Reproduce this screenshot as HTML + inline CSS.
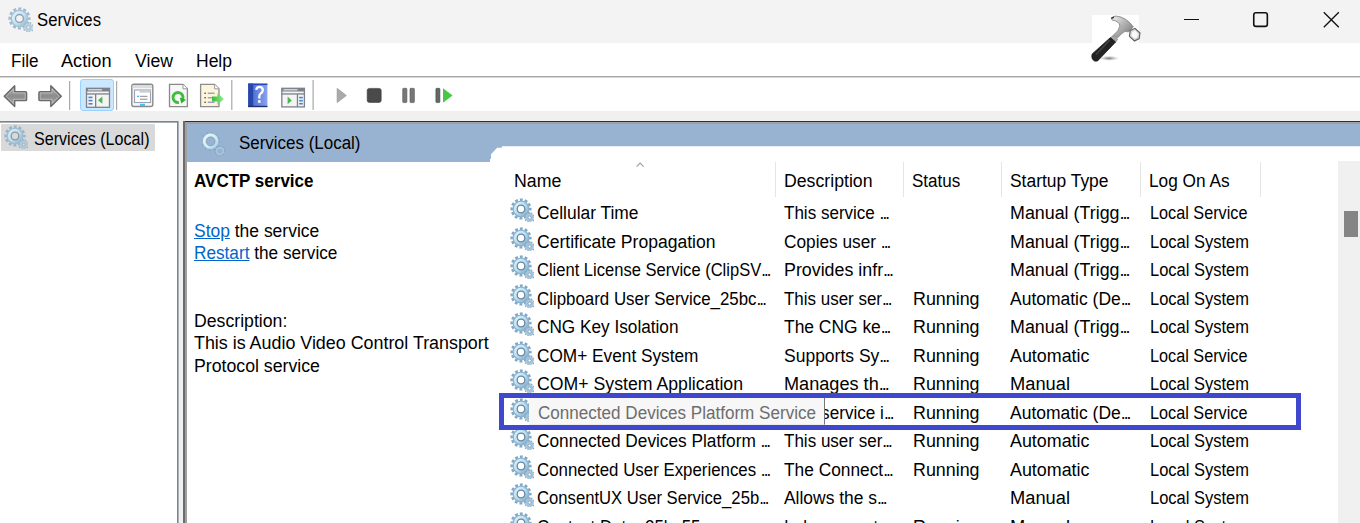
<!DOCTYPE html><html><head><meta charset="utf-8"><style>
*{margin:0;padding:0;box-sizing:border-box}
html,body{width:1360px;height:523px;overflow:hidden;background:#fff;font-family:"Liberation Sans",sans-serif}
.a{position:absolute}
.t{position:absolute;white-space:nowrap;line-height:18px;transform-origin:0 0}
.el{letter-spacing:-2px}
.lk{color:#0066cc;text-decoration:underline}
</style></head><body><div class="a" style="left:0;top:0;width:1360px;height:43px;background:#f3f3f3"></div>
<div class="a" style="left:0;top:76px;width:1360px;height:1px;background:#a8a8a8"></div>
<div class="a" style="left:0;top:77px;width:1360px;height:1px;background:#d4d8de"></div>
<div class="a" style="left:0;top:111px;width:1360px;height:10px;background:#f0f0f0"></div>
<div class="a" style="left:0;top:121px;width:184px;height:402px;background:#f0f0f0"></div>
<div class="a" style="left:0;top:121px;width:179px;height:402px;background:#fff"></div>
<div class="a" style="left:0;top:121px;width:179px;height:1px;background:#7d8593"></div>
<div class="a" style="left:0;top:122px;width:178px;height:1px;background:#a9afb8"></div>
<div class="a" style="left:177px;top:121px;width:1px;height:402px;background:#7d8593"></div>
<div class="a" style="left:178px;top:121px;width:1px;height:402px;background:#a9afb8"></div>
<div class="a" style="left:1px;top:124px;width:154px;height:27px;background:#d9d9d9;border-radius:1px"></div>
<div class="a" style="left:183px;top:121px;width:1177px;height:402px;background:#a0a0a0"></div>
<div class="a" style="left:183px;top:121px;width:1177px;height:1px;background:#303030"></div>
<div class="a" style="left:183px;top:121px;width:2px;height:402px;background:#6c6c6c"></div>
<div class="a" style="left:186.5px;top:123.8px;width:1174px;height:400px;background:#fff"></div>
<div class="a" style="left:186.5px;top:123.8px;width:1174px;height:38px;background:#98b2d2"></div>
<div class="a" style="left:489.7px;top:146.3px;width:870.3px;height:377px;background:#fff;clip-path:polygon(0 15.5px,0 12.5px,1.3px 12.5px,1.3px 8px,7.2px 1.8px,7.2px 1.5px,12.2px 1.5px,12.2px 0,100% 0,100% 100%,0 100%)"></div>
<div class="a" style="left:775px;top:162px;width:1px;height:35px;background:#e5e5e5"></div>
<div class="a" style="left:903px;top:162px;width:1px;height:35px;background:#e5e5e5"></div>
<div class="a" style="left:1001px;top:162px;width:1px;height:35px;background:#e5e5e5"></div>
<div class="a" style="left:1140px;top:162px;width:1px;height:35px;background:#e5e5e5"></div>
<div class="a" style="left:1260px;top:162px;width:1px;height:35px;background:#e5e5e5"></div>
<div class="a" style="left:1338px;top:161px;width:22px;height:362px;background:#f0f0f0"></div>
<div class="a" style="left:1344px;top:211px;width:14px;height:25.5px;background:#858585"></div>
<svg class="a" style="left:634px;top:160px" width="12" height="9"><path d="M2.6 6.6 L6.1 3.1 L9.6 6.6" fill="none" stroke="#a0a0a0" stroke-width="1.2"/></svg>
<svg width="0" height="0" style="position:absolute"><defs>
<linearGradient id="gb" x1="0" y1="0" x2="1" y2="1"><stop offset="0" stop-color="#d8f2fc"/><stop offset="0.55" stop-color="#b4dcf0"/><stop offset="1" stop-color="#86aecb"/></linearGradient>
<linearGradient id="gh" x1="0" y1="0" x2="1" y2="1"><stop offset="0" stop-color="#e4f8fc"/><stop offset="0.6" stop-color="#c8ecf6"/><stop offset="1" stop-color="#a6cfe8"/></linearGradient>
<symbol id="gear" viewBox="0 0 24 24">
<circle cx="11" cy="11" r="9.3" fill="none" stroke="#83a8c4" stroke-width="2.6" stroke-dasharray="2.9 1.97" stroke-dashoffset="1.45"/>
<circle cx="11" cy="11" r="6.1" fill="none" stroke="#8cb2ce" stroke-width="4.9"/>
<circle cx="11" cy="11" r="5.6" fill="none" stroke="url(#gb)" stroke-width="3.2"/>
<circle cx="11" cy="11" r="3.8" fill="none" stroke="#6c88a0" stroke-width="1.3"/>
<circle cx="19.6" cy="19.6" r="4.5" fill="none" stroke="#86a7c0" stroke-width="1.8" stroke-dasharray="1.4 1.43" stroke-dashoffset="0.7"/>
<circle cx="19.6" cy="19.6" r="2.8" fill="none" stroke="#a3c6dc" stroke-width="2.6"/>
<circle cx="19.6" cy="19.6" r="1.5" fill="none" stroke="#7d9bb3" stroke-width="0.7"/>
</symbol>
<symbol id="gearh" viewBox="0 0 24 24">
<circle cx="8.6" cy="9.3" r="8.9" fill="none" stroke="#7890ab" stroke-width="1.4" stroke-dasharray="1.1 3.6" opacity="0.6"/>
<circle cx="8.6" cy="9.3" r="6.2" fill="none" stroke="url(#gh)" stroke-width="3.2"/>
<circle cx="8.6" cy="9.3" r="4.5" fill="none" stroke="#7e7a78" stroke-width="0.8" opacity="0.55"/>
<circle cx="18" cy="19" r="3.3" fill="none" stroke="#b4d0e2" stroke-width="1.4" opacity="0.7"/>
<circle cx="18" cy="19" r="4.9" fill="none" stroke="#7890ab" stroke-width="1.1" stroke-dasharray="1 2.1" opacity="0.6"/>
</symbol></defs></svg>
<svg class="a" style="left:7.5px;top:6.5px;opacity:0.75" width="25" height="25"><use href="#gear"/></svg>
<svg class="a" style="left:3.5px;top:124.5px;opacity:0.75" width="24" height="24"><use href="#gear"/></svg>
<svg class="a" style="left:202px;top:132px;opacity:1" width="24" height="24"><use href="#gearh"/></svg>
<svg class="a" style="left:510px;top:198.2px;opacity:1" width="24" height="24"><use href="#gear"/></svg>
<svg class="a" style="left:510px;top:226.7px;opacity:1" width="24" height="24"><use href="#gear"/></svg>
<svg class="a" style="left:510px;top:255.2px;opacity:1" width="24" height="24"><use href="#gear"/></svg>
<svg class="a" style="left:510px;top:283.7px;opacity:1" width="24" height="24"><use href="#gear"/></svg>
<svg class="a" style="left:510px;top:312.2px;opacity:1" width="24" height="24"><use href="#gear"/></svg>
<svg class="a" style="left:510px;top:340.7px;opacity:1" width="24" height="24"><use href="#gear"/></svg>
<svg class="a" style="left:510px;top:369.2px;opacity:1" width="24" height="24"><use href="#gear"/></svg>
<svg class="a" style="left:510px;top:397.7px;opacity:1" width="24" height="24"><use href="#gear"/></svg>
<svg class="a" style="left:510px;top:426.2px;opacity:1" width="24" height="24"><use href="#gear"/></svg>
<svg class="a" style="left:510px;top:454.7px;opacity:1" width="24" height="24"><use href="#gear"/></svg>
<svg class="a" style="left:510px;top:483.2px;opacity:1" width="24" height="24"><use href="#gear"/></svg>
<svg class="a" style="left:510px;top:511.7px;opacity:1" width="24" height="24"><use href="#gear"/></svg>
<div class="t" style="left:36.5px;top:11.0px;font-size:18px;font-weight:normal;color:#000;transform:scaleX(0.9271)">Services</div>
<div class="t" style="left:11.0px;top:52.0px;font-size:18px;font-weight:normal;color:#000;transform:scaleX(0.9478)">File</div>
<div class="t" style="left:61.0px;top:52.0px;font-size:18px;font-weight:normal;color:#000;transform:scaleX(1.0094)">Action</div>
<div class="t" style="left:134.5px;top:52.0px;font-size:18px;font-weight:normal;color:#000;transform:scaleX(0.9818)">View</div>
<div class="t" style="left:195.5px;top:52.0px;font-size:18px;font-weight:normal;color:#000;transform:scaleX(0.9722)">Help</div>
<div class="t" style="left:34.0px;top:129.7px;font-size:18px;font-weight:normal;color:#000;transform:scaleX(0.8950)">Services (Local)</div>
<div class="t" style="left:238.5px;top:134.3px;font-size:18px;font-weight:normal;color:#000;transform:scaleX(0.9415)">Services (Local)</div>
<div class="t" style="left:193.6px;top:172.0px;font-size:18px;font-weight:bold;color:#000;transform:scaleX(0.9454)">AVCTP service</div>
<div class="t" style="left:193.9px;top:221.6px;font-size:18px;font-weight:normal;color:#000;transform:scaleX(0.9700)"><span class="lk">Stop</span> the service</div>
<div class="t" style="left:193.9px;top:244.1px;font-size:18px;font-weight:normal;color:#000;transform:scaleX(0.9555)"><span class="lk">Restart</span> the service</div>
<div class="t" style="left:194.2px;top:311.6px;font-size:18px;font-weight:normal;color:#000;transform:scaleX(0.9816)">Description:</div>
<div class="t" style="left:194.2px;top:334.1px;font-size:18px;font-weight:normal;color:#000;transform:scaleX(0.9928)">This is Audio Video Control Transport</div>
<div class="t" style="left:194.2px;top:356.6px;font-size:18px;font-weight:normal;color:#000;transform:scaleX(0.9831)">Protocol service</div>
<div class="t" style="left:513.7px;top:172.2px;font-size:18px;font-weight:normal;color:#000;transform:scaleX(0.9851)">Name</div>
<div class="t" style="left:783.7px;top:172.2px;font-size:18px;font-weight:normal;color:#000;transform:scaleX(0.9828)">Description</div>
<div class="t" style="left:912.4px;top:172.2px;font-size:18px;font-weight:normal;color:#000;transform:scaleX(0.9465)">Status</div>
<div class="t" style="left:1010.0px;top:172.2px;font-size:18px;font-weight:normal;color:#000;transform:scaleX(0.9682)">Startup Type</div>
<div class="t" style="left:1149.3px;top:172.2px;font-size:18px;font-weight:normal;color:#000;transform:scaleX(0.9576)">Log On As</div>
<div class="t" style="left:537.0px;top:204.2px;font-size:18px;font-weight:normal;color:#000;transform:scaleX(0.9664)">Cellular Time</div>
<div class="t" style="left:783.5px;top:204.2px;font-size:18px;font-weight:normal;color:#000;transform:scaleX(0.9460)">This service <span class="el">...</span></div>
<div class="t" style="left:1010.4px;top:204.2px;font-size:18px;font-weight:normal;color:#000;transform:scaleX(0.9925)">Manual (Trigg<span class="el">...</span></div>
<div class="t" style="left:1150.0px;top:204.2px;font-size:18px;font-weight:normal;color:#000;transform:scaleX(0.9023)">Local Service</div>
<div class="t" style="left:537.0px;top:232.7px;font-size:18px;font-weight:normal;color:#000;transform:scaleX(0.9748)">Certificate Propagation</div>
<div class="t" style="left:783.5px;top:232.7px;font-size:18px;font-weight:normal;color:#000;transform:scaleX(0.9584)">Copies user <span class="el">...</span></div>
<div class="t" style="left:1010.4px;top:232.7px;font-size:18px;font-weight:normal;color:#000;transform:scaleX(0.9925)">Manual (Trigg<span class="el">...</span></div>
<div class="t" style="left:1150.0px;top:232.7px;font-size:18px;font-weight:normal;color:#000;transform:scaleX(0.9163)">Local System</div>
<div class="t" style="left:537.0px;top:261.2px;font-size:18px;font-weight:normal;color:#000;transform:scaleX(0.9185)">Client License Service (ClipSV<span class="el">...</span></div>
<div class="t" style="left:783.5px;top:261.2px;font-size:18px;font-weight:normal;color:#000;transform:scaleX(0.9903)">Provides infr<span class="el">...</span></div>
<div class="t" style="left:1010.4px;top:261.2px;font-size:18px;font-weight:normal;color:#000;transform:scaleX(0.9925)">Manual (Trigg<span class="el">...</span></div>
<div class="t" style="left:1150.0px;top:261.2px;font-size:18px;font-weight:normal;color:#000;transform:scaleX(0.9163)">Local System</div>
<div class="t" style="left:537.0px;top:289.7px;font-size:18px;font-weight:normal;color:#000;transform:scaleX(0.9377)">Clipboard User Service_25bc<span class="el">...</span></div>
<div class="t" style="left:783.5px;top:289.7px;font-size:18px;font-weight:normal;color:#000;transform:scaleX(0.9421)">This user ser<span class="el">...</span></div>
<div class="t" style="left:913.0px;top:289.7px;font-size:18px;font-weight:normal;color:#000;transform:scaleX(0.9916)">Running</div>
<div class="t" style="left:1010.4px;top:289.7px;font-size:18px;font-weight:normal;color:#000;transform:scaleX(0.9711)">Automatic (De<span class="el">...</span></div>
<div class="t" style="left:1150.0px;top:289.7px;font-size:18px;font-weight:normal;color:#000;transform:scaleX(0.9163)">Local System</div>
<div class="t" style="left:537.0px;top:318.2px;font-size:18px;font-weight:normal;color:#000;transform:scaleX(0.9557)">CNG Key Isolation</div>
<div class="t" style="left:783.5px;top:318.2px;font-size:18px;font-weight:normal;color:#000;transform:scaleX(0.9675)">The CNG ke<span class="el">...</span></div>
<div class="t" style="left:913.0px;top:318.2px;font-size:18px;font-weight:normal;color:#000;transform:scaleX(0.9916)">Running</div>
<div class="t" style="left:1010.4px;top:318.2px;font-size:18px;font-weight:normal;color:#000;transform:scaleX(0.9925)">Manual (Trigg<span class="el">...</span></div>
<div class="t" style="left:1150.0px;top:318.2px;font-size:18px;font-weight:normal;color:#000;transform:scaleX(0.9163)">Local System</div>
<div class="t" style="left:537.0px;top:346.7px;font-size:18px;font-weight:normal;color:#000;transform:scaleX(0.9581)">COM+ Event System</div>
<div class="t" style="left:783.5px;top:346.7px;font-size:18px;font-weight:normal;color:#000;transform:scaleX(0.9722)">Supports Sy<span class="el">...</span></div>
<div class="t" style="left:913.0px;top:346.7px;font-size:18px;font-weight:normal;color:#000;transform:scaleX(0.9916)">Running</div>
<div class="t" style="left:1010.4px;top:346.7px;font-size:18px;font-weight:normal;color:#000;transform:scaleX(0.9932)">Automatic</div>
<div class="t" style="left:1150.0px;top:346.7px;font-size:18px;font-weight:normal;color:#000;transform:scaleX(0.9023)">Local Service</div>
<div class="t" style="left:537.0px;top:375.2px;font-size:18px;font-weight:normal;color:#000;transform:scaleX(0.9829)">COM+ System Application</div>
<div class="t" style="left:783.5px;top:375.2px;font-size:18px;font-weight:normal;color:#000;transform:scaleX(1.0070)">Manages th<span class="el">...</span></div>
<div class="t" style="left:913.0px;top:375.2px;font-size:18px;font-weight:normal;color:#000;transform:scaleX(0.9916)">Running</div>
<div class="t" style="left:1010.4px;top:375.2px;font-size:18px;font-weight:normal;color:#000;transform:scaleX(1.0161)">Manual</div>
<div class="t" style="left:1150.0px;top:375.2px;font-size:18px;font-weight:normal;color:#000;transform:scaleX(0.9163)">Local System</div>
<div class="t" style="left:783.5px;top:403.7px;font-size:18px;font-weight:normal;color:#000;transform:scaleX(0.9514)">This service i<span class="el">...</span></div>
<div class="t" style="left:913.0px;top:403.7px;font-size:18px;font-weight:normal;color:#000;transform:scaleX(0.9916)">Running</div>
<div class="t" style="left:1010.4px;top:403.7px;font-size:18px;font-weight:normal;color:#000;transform:scaleX(0.9711)">Automatic (De<span class="el">...</span></div>
<div class="t" style="left:1150.0px;top:403.7px;font-size:18px;font-weight:normal;color:#000;transform:scaleX(0.9023)">Local Service</div>
<div class="t" style="left:537.0px;top:432.2px;font-size:18px;font-weight:normal;color:#000;transform:scaleX(0.9592)">Connected Devices Platform <span class="el">...</span></div>
<div class="t" style="left:783.5px;top:432.2px;font-size:18px;font-weight:normal;color:#000;transform:scaleX(0.9456)">This user ser<span class="el">...</span></div>
<div class="t" style="left:913.0px;top:432.2px;font-size:18px;font-weight:normal;color:#000;transform:scaleX(0.9916)">Running</div>
<div class="t" style="left:1010.4px;top:432.2px;font-size:18px;font-weight:normal;color:#000;transform:scaleX(0.9932)">Automatic</div>
<div class="t" style="left:1150.0px;top:432.2px;font-size:18px;font-weight:normal;color:#000;transform:scaleX(0.9163)">Local System</div>
<div class="t" style="left:537.0px;top:460.7px;font-size:18px;font-weight:normal;color:#000;transform:scaleX(0.9360)">Connected User Experiences <span class="el">...</span></div>
<div class="t" style="left:783.5px;top:460.7px;font-size:18px;font-weight:normal;color:#000;transform:scaleX(0.9618)">The Connect<span class="el">...</span></div>
<div class="t" style="left:913.0px;top:460.7px;font-size:18px;font-weight:normal;color:#000;transform:scaleX(0.9916)">Running</div>
<div class="t" style="left:1010.4px;top:460.7px;font-size:18px;font-weight:normal;color:#000;transform:scaleX(0.9932)">Automatic</div>
<div class="t" style="left:1150.0px;top:460.7px;font-size:18px;font-weight:normal;color:#000;transform:scaleX(0.9163)">Local System</div>
<div class="t" style="left:537.0px;top:489.2px;font-size:18px;font-weight:normal;color:#000;transform:scaleX(0.9252)">ConsentUX User Service_25b<span class="el">...</span></div>
<div class="t" style="left:783.5px;top:489.2px;font-size:18px;font-weight:normal;color:#000;transform:scaleX(0.9680)">Allows the s<span class="el">...</span></div>
<div class="t" style="left:1010.4px;top:489.2px;font-size:18px;font-weight:normal;color:#000;transform:scaleX(1.0161)">Manual</div>
<div class="t" style="left:1150.0px;top:489.2px;font-size:18px;font-weight:normal;color:#000;transform:scaleX(0.9163)">Local System</div>
<div class="t" style="left:537.0px;top:517.7px;font-size:18px;font-weight:normal;color:#000;transform:scaleX(0.9390)">Contact Data_25bc55</div>
<div class="t" style="left:783.5px;top:517.7px;font-size:18px;font-weight:normal;color:#000;transform:scaleX(0.9226)">Indexes cont<span class="el">...</span></div>
<div class="t" style="left:913.0px;top:517.7px;font-size:18px;font-weight:normal;color:#000;transform:scaleX(0.9916)">Running</div>
<div class="t" style="left:1010.4px;top:517.7px;font-size:18px;font-weight:normal;color:#000;transform:scaleX(1.0161)">Manual</div>
<div class="t" style="left:1150.0px;top:517.7px;font-size:18px;font-weight:normal;color:#000;transform:scaleX(0.9163)">Local System</div>
<div class="a" style="left:529px;top:398px;width:296px;height:26.5px;background:#f7f7f7;border-right:1px solid #777;border-bottom:1px solid #ececec"></div>
<div class="t" style="left:538.0px;top:404.3px;font-size:18px;font-weight:normal;color:#6d6d6d;transform:scaleX(0.9484)">Connected Devices Platform Service</div>
<div class="a" style="left:499px;top:393px;width:802px;height:37px;border:5px solid #3f48cc"></div>
<svg class="a" style="left:0;top:78px" width="470" height="33" viewBox="0 78 470 33">
<defs>
<linearGradient id="ag" x1="0" y1="0" x2="0" y2="1"><stop offset="0" stop-color="#b4b4b4"/><stop offset="0.5" stop-color="#8c8c8c"/><stop offset="1" stop-color="#acacac"/></linearGradient>
<linearGradient id="hb" x1="0" y1="0" x2="1" y2="0"><stop offset="0" stop-color="#3d63d6"/><stop offset="1" stop-color="#8aa3ec"/></linearGradient>
<linearGradient id="gr" x1="0" y1="0" x2="1" y2="0"><stop offset="0" stop-color="#3cb83c"/><stop offset="1" stop-color="#8ef08e"/></linearGradient>
</defs>
<!-- back / forward arrows -->
<path d="M4.2 96.2 L14.7 85.7 L14.7 91.6 L25.4 91.6 Q26.6 91.6 26.6 92.8 L26.6 99.4 Q26.6 100.6 25.4 100.6 L14.7 100.6 L14.7 106.5 Z" fill="url(#ag)" stroke="#6a6a6a" stroke-width="1.4" stroke-linejoin="round"/>
<path d="M6.3 96.2 L13.4 89.1 L13.4 92.9 L25.2 92.9 L25.2 99.3 L13.4 99.3 L13.4 103.3 Z" fill="none" stroke="#d0d0d0" stroke-width="0.7" opacity="0.8"/>
<path d="M61.3 96.2 L50.8 85.7 L50.8 91.6 L40.1 91.6 Q38.9 91.6 38.9 92.8 L38.9 99.4 Q38.9 100.6 40.1 100.6 L50.8 100.6 L50.8 106.5 Z" fill="url(#ag)" stroke="#6a6a6a" stroke-width="1.4" stroke-linejoin="round"/>
<path d="M59.2 96.2 L52.1 89.1 L52.1 92.9 L40.3 92.9 L40.3 99.3 L52.1 99.3 L52.1 103.3 Z" fill="none" stroke="#d0d0d0" stroke-width="0.7" opacity="0.8"/>
<rect x="69" y="81" width="1.2" height="29" fill="#a9a9a9"/>
<!-- highlighted button -->
<rect x="80.5" y="79.5" width="33" height="31" rx="2.5" fill="#cce8ff" stroke="#99d1ff" stroke-width="1"/>
<rect x="86.5" y="88.3" width="23" height="19" fill="#f4f4f4" stroke="#7b828c" stroke-width="1.3"/>
<rect x="86.5" y="88.3" width="23" height="3.2" fill="#7b828c"/>
<rect x="88" y="89.2" width="14" height="1.2" fill="#e6e6e6"/>
<rect x="86.5" y="93.3" width="23" height="1.3" fill="#7b828c"/>
<rect x="95" y="94" width="1.3" height="13.5" fill="#7b828c"/>
<rect x="88.5" y="96.6" width="4" height="1.6" fill="#4a84c8"/>
<rect x="88.5" y="99.8" width="4" height="1.6" fill="#4a84c8"/>
<rect x="88.5" y="103" width="4" height="1.6" fill="#4a84c8"/>
<path d="M98 100.2 L102.4 96.6 L102.4 103.8 Z" fill="#48b848"/>
<rect x="116" y="81" width="1.2" height="29" fill="#a9a9a9"/>
<!-- properties -->
<rect x="131.8" y="84.3" width="21" height="22.2" rx="2" fill="#f6f6f6" stroke="#8a8a8a" stroke-width="1.4"/>
<rect x="132.5" y="85" width="19.5" height="3" fill="#d8dde2"/>
<rect x="134.5" y="90" width="16" height="12.5" fill="#fff" stroke="#9aa2b4" stroke-width="1.1"/>
<rect x="139.5" y="90" width="11" height="2.6" fill="#c8ccd6"/>
<circle cx="138" cy="96.3" r="0.9" fill="#22aaf0"/>
<rect x="140" y="95.8" width="7.5" height="1" fill="#8a8a8a"/>
<rect x="140" y="98.7" width="7.5" height="1" fill="#8a8a8a"/>
<rect x="140" y="103.8" width="5" height="2.2" fill="#3cc8f4"/>
<!-- refresh doc -->
<path d="M169.5 84.4 L183 84.4 L187.4 88.8 L187.4 106.6 L169.5 106.6 Z" fill="#f7f7f7" stroke="#8a8a8a" stroke-width="1.3"/>
<path d="M183 84.4 L183 88.8 L187.4 88.8" fill="#fff" stroke="#9a9a9a" stroke-width="1"/>
<path d="M178.9 102.4 A5 5 0 1 1 182.7 99.2" fill="none" stroke="#3ebd3e" stroke-width="2.9"/>
<path d="M185.9 99.8 L181.3 103.4 L179.8 97.6 Z" fill="#2fae2f"/>
<!-- export list -->
<path d="M200.6 84.4 L214.6 84.4 L219 88.8 L219 106.6 L200.6 106.6 Z" fill="#fcf5dc" stroke="#8c8c8c" stroke-width="1.3"/>
<path d="M214.6 84.4 L214.6 88.8 L219 88.8" fill="#fff" stroke="#9a9a9a" stroke-width="1"/>
<circle cx="205.1" cy="93.2" r="0.8" fill="#333"/><circle cx="205.1" cy="97.8" r="0.8" fill="#333"/><circle cx="205.1" cy="102.2" r="0.8" fill="#333"/>
<rect x="207.8" y="92.7" width="6.8" height="1" fill="#7a78a8"/>
<rect x="207.8" y="97.3" width="6.8" height="1" fill="#7a78a8"/>
<rect x="207.8" y="101.7" width="6.8" height="1" fill="#7a78a8"/>
<path d="M212 96.4 L217.5 96.4 L217.5 93.3 L224 99 L217.5 104.7 L217.5 101.6 L212 101.6 Z" fill="url(#gr)"/>
<rect x="231.2" y="80" width="1.2" height="30" fill="#a9a9a9"/>
<!-- help -->
<rect x="248.2" y="83.6" width="19.2" height="23.4" fill="url(#hb)"/>
<rect x="248.2" y="83.6" width="5" height="23.4" fill="#2a47a8"/>
<rect x="248.2" y="83.6" width="19.2" height="1.4" fill="#2546b8"/>
<rect x="248.2" y="105.8" width="19.2" height="1.4" fill="#20306a"/>
<path d="M256.2 89.8 Q256.6 86.8 259.6 86.8 Q262.8 86.9 262.8 90.2 Q262.7 92.3 260.6 93.6 Q259.3 94.5 259.3 96.8 L259.3 98.4" fill="none" stroke="#fff" stroke-width="2.3"/>
<rect x="258.1" y="100.2" width="2.5" height="2.6" fill="#fff"/>
<!-- action pane -->
<rect x="281.8" y="88.3" width="22.6" height="18.6" fill="#f4f4f4" stroke="#7b828c" stroke-width="1.3"/>
<rect x="281.8" y="88.3" width="22.6" height="3.2" fill="#7b828c"/>
<rect x="283.5" y="89.2" width="14" height="1.2" fill="#e6e6e6"/>
<rect x="281.8" y="93.3" width="22.6" height="1.3" fill="#7b828c"/>
<rect x="296.8" y="94" width="1.3" height="13" fill="#7b828c"/>
<rect x="299.2" y="96.8" width="3.6" height="1.6" fill="#4a84c8"/>
<rect x="299.2" y="99.9" width="3.6" height="1.6" fill="#4a84c8"/>
<rect x="299.2" y="102.9" width="3.6" height="1.6" fill="#4a84c8"/>
<path d="M287.6 96.6 L291.8 100.5 L287.6 104.3 Z" fill="#48b848"/>
<rect x="312.5" y="80" width="1.2" height="30" fill="#a9a9a9"/>
<!-- play / stop / pause / restart -->
<path d="M337.2 88.4 L346.3 95.5 L337.2 102.5 Z" fill="#aaa" stroke="#999" stroke-width="0.8" stroke-linejoin="round"/>
<rect x="367.2" y="88.4" width="14" height="14" rx="2.2" fill="#4a4a4a" stroke="#3a3a3a" stroke-width="0.6"/>
<rect x="402.7" y="88.3" width="4.2" height="14.3" rx="0.8" fill="#777" stroke="#555" stroke-width="0.6"/>
<rect x="410" y="88.3" width="4.4" height="14.3" rx="0.8" fill="#777" stroke="#555" stroke-width="0.6"/>
<rect x="435.9" y="88.3" width="4" height="14.3" rx="0.8" fill="#666" stroke="#444" stroke-width="0.6"/>
<path d="M443 88.2 L452.5 95.5 L443 102.7 Z" fill="#46c846"/>
</svg>

<div class="a" style="left:1092px;top:15px;width:47px;height:28px;background:#fff"></div>
<svg class="a" style="left:1088px;top:12px" width="56" height="52" viewBox="1088 12 56 52">
<defs>
<linearGradient id="hm" x1="0" y1="0" x2="1" y2="1"><stop offset="0" stop-color="#f2f2f2"/><stop offset="0.45" stop-color="#b4b4b4"/><stop offset="1" stop-color="#6e6e6e"/></linearGradient>
<linearGradient id="hd" x1="0" y1="0" x2="1" y2="0"><stop offset="0" stop-color="#1a1a1a"/><stop offset="0.5" stop-color="#3a3a3a"/><stop offset="1" stop-color="#151515"/></linearGradient>
<radialGradient id="sh" cx="50%" cy="50%" r="50%"><stop offset="0" stop-color="#444" stop-opacity="0.75"/><stop offset="1" stop-color="#999" stop-opacity="0"/></radialGradient>
</defs>
<ellipse cx="1109" cy="58.3" rx="10" ry="2.6" fill="url(#sh)"/>
<path d="M1111.4 18.5 Q1113 15.8 1116.5 16.1 Q1126.5 17.3 1133.3 26.8 L1128.6 31.8 Q1124.5 30.2 1121.5 33.8 L1117.6 37.8 L1113.3 35.3 Q1119.2 30.5 1119.9 26 Q1119.6 21.3 1112.2 20.1 Z" fill="url(#hm)" stroke="#6d6d6d" stroke-width="0.7"/>
<path d="M1111.4 18.5 Q1112.5 17.2 1114 17.6" stroke="#333" stroke-width="1.6" fill="none"/>
<path d="M1130.2 30.4 L1135 28.3 L1140 33 L1139.2 38.6 L1134.5 41 L1129.4 36.3 Z" fill="#d6d6d6" stroke="#5e5e5e" stroke-width="1.1"/>
<path d="M1132.2 32 L1135.3 30.6 L1137.8 33.8 L1137.1 37.2 L1134 38.4 L1131.6 35.4 Z" fill="#fafafa"/>
<path d="M1112.9 35.6 L1117.8 39.2 L1115.6 42.2 L1110.6 37.6 Z" fill="#a6a6a6" stroke="#777" stroke-width="0.5"/>
<path d="M1110.4 37.6 L1115.6 42.1 L1097.6 60.9 Q1094.2 62.3 1092.2 58.8 Q1091.3 56 1092.2 53.9 Z" fill="#232323" stroke="#111" stroke-width="0.7" stroke-linejoin="round"/>
<path d="M1109.6 40.2 L1096 54.6" stroke="#4a4a4a" stroke-width="1.2"/>
</svg>

<div class="a" style="left:1184px;top:19px;width:15px;height:1px;background:#111"></div>
<svg class="a" style="left:1250px;top:9px" width="21" height="21"><rect x="3.75" y="3.75" width="13.6" height="13.6" rx="2.2" fill="none" stroke="#111" stroke-width="1.6"/></svg>
<svg class="a" style="left:1322px;top:11px" width="18" height="17"><path d="M1.8 1.2 L16.8 16.2 M16.8 1.2 L1.8 16.2" stroke="#111" stroke-width="1.3"/></svg></body></html>
